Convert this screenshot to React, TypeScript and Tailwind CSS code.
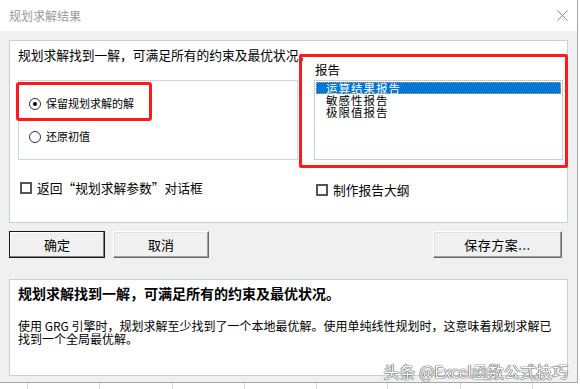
import type { ReactNode } from 'react'

const CJK = "font-['Noto_Sans_CJK_SC','Liberation_Sans',sans-serif]"

function Radio({ checked, children }: { checked?: boolean; children: ReactNode }) {
  return (
    <div className="flex items-center h-[13px]">
      <span className="w-[12px] h-[12px] rounded-full border border-[#333] bg-white flex items-center justify-center shrink-0">
        {checked && <span className="w-[4px] h-[4px] rounded-full bg-black" />}
      </span>
      <span className="ml-[5px] text-[11px] leading-[13px] text-black">{children}</span>
    </div>
  )
}

function Check({ children }: { children: ReactNode }) {
  return (
    <div className="flex items-center h-[13px]">
      <span className="w-[12px] h-[12px] border-2 border-[#555] bg-white shrink-0" />
      <span className="ml-[5px] text-[12.75px] leading-[13px] text-black whitespace-nowrap">{children}</span>
    </div>
  )
}

function Button({ children, def, className = '' }: { children: ReactNode; def?: boolean; className?: string }) {
  return (
    <div
      className={`h-[27px] flex items-center justify-center text-[13px] text-black bg-[#f0f0f0] border ${
        def
          ? 'border-[#1a1a1a] shadow-[inset_-1px_-1px_0_#808080,inset_1px_1px_0_#ffffff]'
          : 'border-t-white border-l-white border-r-[#696969] border-b-[#696969] shadow-[inset_-1px_-1px_0_#a0a0a0,inset_1px_1px_0_#e3e3e3]'
      } ${className}`}
    >
      {children}
    </div>
  )
}

const gridCols = [28, 72, 73, 72, 72, 71, 73, 72]

export default function App() {
  return (
    <div className={`w-[580px] h-[389px] bg-white overflow-hidden flex flex-col relative ${CJK}`}>
      <div className="flex h-[383px]">
        <div className="w-[578px] flex flex-col bg-[#f0f0f0] border-r border-b border-[#a8a8a8]">
          {/* Title bar */}
          <div className="h-[31px] bg-white flex items-center justify-between pl-[9px] pr-[8px]">
            <span className="text-[12px] text-[#9a9a9a]">规划求解结果</span>
            <svg width="11" height="11" viewBox="0 0 11 11" className="mr-[1px]">
              <path d="M0.5 0.5L10.5 10.5M10.5 0.5L0.5 10.5" stroke="#8a8a8a" strokeWidth="1" />
            </svg>
          </div>

          <div className="flex flex-col px-[9px] pt-[9px]">
            {/* Top panel */}
            <div className="relative h-[183px] bg-white border border-[#c5d0dc]">
              <div className="h-[22px] pt-[7px] pl-[8px] text-[12.75px] leading-[14px] text-black whitespace-nowrap">
                规划求解找到一解，可满足所有的约束及最优状况。
              </div>
              <div className="flex">
                <div className="w-[280px] ml-[8px] flex flex-col">
                  <div className="mt-[17px] h-[80px] border border-[#cfd6de] pl-[10px] pt-[16px] flex flex-col gap-[20px]">
                    <Radio checked>保留规划求解的解</Radio>
                    <Radio>还原初值</Radio>
                  </div>
                  <div className="mt-[21px] ml-[2px]">
                    <Check>返回“规划求解参数”对话框</Check>
                  </div>
                </div>
                <div className="ml-[16px] w-[249px] flex flex-col">
                  <div className="h-[14px] leading-[14px] text-[12.5px] pl-[1px] text-black">报告</div>
                  <div className="mt-[3px] h-[80px] border border-[#c5d0dc] p-[1px] text-[11.5px] tracking-[1px] leading-[12px] text-black">
                    <div className="h-[12px] bg-[#0078d7] text-white pl-[10px] outline-1 outline-dotted outline-[#f0a050] -outline-offset-1">运算结果报告</div>
                    <div className="h-[12px] pl-[10px]">敏感性报告</div>
                    <div className="h-[12px] pl-[10px]">极限值报告</div>
                  </div>
                  <div className="mt-[23px] ml-[2px]">
                    <Check>制作报告大纲</Check>
                  </div>
                </div>
              </div>

              {/* annotation boxes */}
              <div className="absolute left-[6px] top-[41px] w-[136px] h-[39px] border-[3px] border-[#ff1a1a] rounded-[3px]" />
              <div className="absolute left-[289px] top-[13px] w-[269px] h-[114px] border-[3px] border-[#ff1a1a] rounded-[2px]" />
            </div>

            {/* Buttons */}
            <div className="flex mt-[8px] gap-[8px]">
              <Button def className="w-[96px]">确定</Button>
              <Button className="w-[96px]">取消</Button>
              <Button className="w-[129px] ml-auto mr-[6px] tracking-[0.5px]">保存方案...</Button>
            </div>

            {/* Bottom panel */}
            <div className="mt-[21px] h-[97px] bg-white border border-[#c5d0dc] pl-[8px] pt-[6px] text-black">
              <div className="text-[14px] leading-[14px] font-bold whitespace-nowrap">
                规划求解找到一解，可满足所有的约束及最优状况。
              </div>
              <div className="mt-[19px] text-[12px] leading-[13px] w-[540px]">
                使用 GRG 引擎时，规划求解至少找到了一个本地最优解。使用单纯线性规划时，这意味着规划求解已找到一个全局最优解。
              </div>
            </div>
          </div>
        </div>
        <div className="flex-1 bg-white" />
      </div>

      {/* worksheet grid behind the dialog */}
      <div className="flex h-[6px]">
        {gridCols.map((w, i) => (
          <div key={i} style={{ width: w }} className="h-full border-r border-[#d4d4d4]" />
        ))}
        <div className="flex-1" />
      </div>

      {/* watermark */}
      <div className="absolute right-[12px] bottom-[9px] text-[16px] leading-[18px] text-white [text-shadow:0_0_1px_#444,0_0_1px_#444,0_0_1px_#444] font-['Noto_Sans_CJK_SC',sans-serif]">
        头条 @Excel函数公式技巧
      </div>
    </div>
  )
}
